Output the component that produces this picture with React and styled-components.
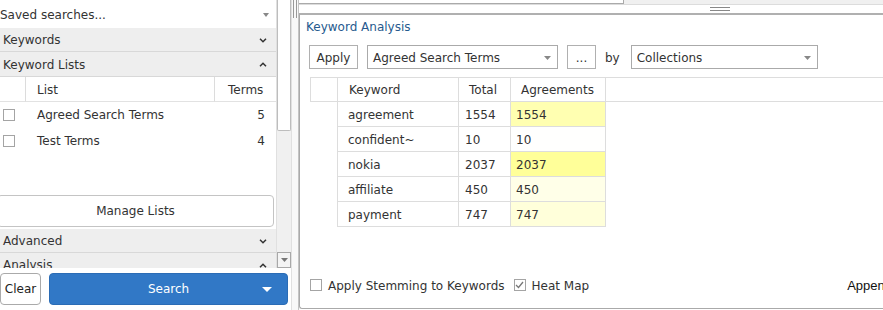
import React from "react";
import styled, { createGlobalStyle } from "styled-components";

const GlobalStyle = createGlobalStyle`
  html, body { margin: 0; padding: 0; background: #fff; overflow: hidden; }
  body {
    font-family: "DejaVu Sans", Verdana, sans-serif;
    font-size: 12px;
    color: #333;
  }
  * { box-sizing: border-box; }
`;

const lists = [
  { name: "Agreed Search Terms", terms: 5 },
  { name: "Test Terms", terms: 4 },
];

const keywords = [
  { word: "agreement", total: 1554, hits: 1554 },
  { word: "confident~", total: 10, hits: 10 },
  { word: "nokia", total: 2037, hits: 2037 },
  { word: "affiliate", total: 450, hits: 450 },
  { word: "payment", total: 747, hits: 747 },
];

const heat = (v, max) => {
  const b = Math.round(255 - (v / max) * 102);
  return `rgb(255,255,${b})`;
};

const Page = styled.div`
  display: flex;
  width: 883px;
  height: 310px;
  overflow: hidden;
`;

const LeftColumn = styled.div`
  width: 291px;
  flex-shrink: 0;
  display: flex;
  flex-direction: column;
`;

const ScrollArea = styled.div`
  height: 268px;
  display: flex;
  overflow: hidden;
`;

const SideContent = styled.div`
  width: 276px;
  display: flex;
  flex-direction: column;
  overflow: hidden;
`;

const SavedRow = styled.div`
  height: 28px;
  flex-shrink: 0;
  display: flex;
  align-items: center;
  justify-content: space-between;
  padding: 1px 7px 0 0;
`;

const SectionHeader = styled.div`
  height: ${(p) => p.$h || 24}px;
  flex-shrink: 0;
  display: flex;
  align-items: center;
  justify-content: space-between;
  padding: 1px 9px 0 3px;
  background: #eeeeee;
  border-bottom: 1px solid #d8d8d8;
`;

const ListTable = styled.div`
  display: grid;
  grid-template-columns: 26px 189px 61px;
  flex-shrink: 0;
`;

const ListHead = styled.div`
  height: 25px;
  display: flex;
  align-items: center;
  padding: 1px 0 0 ${(p) => p.$pad || 0}px;
  border-bottom: 1px solid #e2e2e2;
  border-right: ${(p) => (p.$last ? "none" : "1px solid #dcdcdc")};
`;

const ListCell = styled.div`
  height: 26px;
  display: flex;
  align-items: center;
  justify-content: ${(p) => (p.$right ? "flex-end" : "flex-start")};
  padding: ${(p) => (p.$right ? "0 11px 0 0" : p.$pad ? `0 0 0 ${p.$pad}px` : 0)};
`;

const Box = styled.span`
  width: 12px;
  height: 12px;
  flex-shrink: 0;
  border: 1px solid #a4a4a4;
  background: #fff;
  display: inline-flex;
  align-items: center;
  justify-content: center;
`;

const ManageButton = styled.button`
  flex-shrink: 0;
  margin: 41px 2px 0 -3px;
  width: 277px;
  height: 32px;
  border: 1px solid #c4c4c4;
  border-radius: 4px;
  background: #fff;
  color: #333;
  font: inherit;
`;

const Spacer = styled.div`
  height: ${(p) => p.$h}px;
  flex-shrink: 0;
`;

const Scrollbar = styled.div`
  width: 15px;
  display: flex;
  flex-direction: column;
  background: #f0f0f0;
  border-left: 1px solid #e0e0e0;
`;

const Thumb = styled.div`
  height: 131px;
  background: #fff;
  border: 1px solid #bdbdbd;
  border-top: none;
  border-radius: 0 0 2px 2px;
`;

const ScrollButton = styled.div`
  margin-top: auto;
  height: 16px;
  border: 1px solid #a8a8a8;
  background: #f4f4f4;
  display: flex;
  align-items: center;
  justify-content: center;
`;

const ButtonBar = styled.div`
  display: flex;
  gap: 8px;
  padding-top: 5px;
`;

const ClearButton = styled.button`
  width: 41px;
  height: 32px;
  border: 1px solid #aaa;
  border-radius: 4px;
  background: #fff;
  color: #222;
  font: inherit;
  padding: 0;
`;

const SearchButton = styled.button`
  width: 239px;
  height: 32px;
  border: 1px solid #2b6cb5;
  border-radius: 4px;
  background: #3178c6;
  color: #fff;
  font: inherit;
  display: flex;
  align-items: center;
  padding: 0 15px 0 0;
`;

const SearchLabel = styled.span`
  flex: 1;
  text-align: center;
  padding-left: 25px;
`;

const Splitter = styled.div`
  width: 8px;
  flex-shrink: 0;
  background: #f8f8f8;
  border-left: 1px solid #e0e0e0;
  border-right: 1px solid #c4c4c4;
`;

const VGrip = styled.div`
  width: 4px;
  height: 18px;
  margin-left: 1px;
  border-left: 1px solid #999;
  border-right: 1px solid #999;
`;

const RightColumn = styled.div`
  width: 842px;
  flex-shrink: 0;
  display: flex;
  flex-direction: column;
`;

const TopStrip = styled.div`
  height: 5px;
  display: flex;
  background: #f0f0f0;
  border-bottom: 1px solid #dcdcdc;
`;

const SearchBox = styled.div`
  width: 325px;
  background: #fff;
  border-right: 1px solid #aaa;
  border-bottom: 1px solid #aaa;
`;

const HSplitter = styled.div`
  height: 8px;
  display: flex;
  justify-content: center;
  padding-top: 2px;
`;

const HGrip = styled.div`
  width: 20px;
  height: 4px;
  border-top: 1px solid #888;
  border-bottom: 1px solid #888;
`;

const Panel = styled.div`
  flex: 1;
  margin-bottom: 1px;
  display: flex;
  flex-direction: column;
  border-top: 2px solid #b0b0b0;
  border-left: 1px solid #aaa;
  border-bottom: 1px solid #aaa;
  border-bottom-left-radius: 3px;
`;

const Title = styled.div`
  height: 22px;
  line-height: 22px;
  padding: 1px 0 0 6px;
  color: #265a8e;
`;

const Toolbar = styled.div`
  margin: 8px 0 0 9px;
  height: 24px;
  display: flex;
  align-items: center;
  gap: 9px;
`;

const ToolButton = styled.button`
  width: ${(p) => p.$w}px;
  height: 24px;
  border: 1px solid #b0b0b0;
  background: #fff;
  color: #333;
  font: inherit;
  padding: 1px 0 0;
`;

const Select = styled.div`
  width: ${(p) => p.$w}px;
  height: 24px;
  border: 1px solid #aaa;
  background: #fff;
  display: flex;
  align-items: center;
  justify-content: space-between;
  padding: 1px 6px 0 5px;
`;

const By = styled.span`
  margin: 1px 2px 0 0;
`;

const Grid = styled.div`
  margin: 8px 0 0 10px;
  display: grid;
  grid-template-columns: 28px 121px 52px 95px 1fr;
`;

const HeadCell = styled.div`
  height: 25px;
  display: flex;
  align-items: center;
  padding: 1px 0 0 ${(p) => p.$pad || 0}px;
  border-top: 1px solid #dddddd;
  border-bottom: 1px solid #dddddd;
  border-right: ${(p) => (p.$open ? "none" : "1px solid #dddddd")};
  border-left: ${(p) => (p.$first ? "1px solid #dddddd" : "none")};
`;

const Cell = styled.div`
  height: 25px;
  display: flex;
  align-items: center;
  padding: 1px 0 0 ${(p) => p.$pad || 0}px;
  border-bottom: ${(p) => (p.$blank ? "none" : "1px solid #dddddd")};
  border-right: ${(p) => (p.$open ? "none" : "1px solid #dddddd")};
`;

const Fill = styled.div`
  flex: 1;
`;

const BottomBar = styled.div`
  height: 24px;
  margin: 0 0 11px 10px;
  display: flex;
  align-items: center;
`;

const CheckLabel = styled.span`
  margin: 1px 9px 0 6px;
`;

const AppendLabel = styled.span`
  margin-left: 249px;
  font-family: "Liberation Sans", Arial, sans-serif;
  font-size: 13px;
  color: #111;
`;

const Chevron = ({ up }) => (
  <svg width="8" height="5" viewBox="0 0 8 5">
    <polyline
      points={up ? "1,4.2 4,1.2 7,4.2" : "1,0.8 4,3.8 7,0.8"}
      fill="none"
      stroke="#333"
      strokeWidth="1.5"
    />
  </svg>
);

const Caret = ({ color = "#888", w = 7, h = 4 }) => (
  <svg width={w} height={h} viewBox={`0 0 ${w} ${h}`}>
    <polygon points={`0,0 ${w},0 ${w / 2},${h}`} fill={color} />
  </svg>
);

const Check = ({ on }) => (
  <Box>
    {on && (
      <svg width="9" height="8" viewBox="0 0 9 8">
        <polyline points="1,4 3.5,6.5 8,1" fill="none" stroke="#777" strokeWidth="1.3" />
      </svg>
    )}
  </Box>
);

export default function App() {
  const max = Math.max(...keywords.map((k) => k.hits));
  return (
    <>
      <GlobalStyle />
      <Page>
        <LeftColumn>
          <ScrollArea>
            <SideContent>
              <SavedRow>
                <span>Saved searches...</span>
                <Caret w={6} h={4} />
              </SavedRow>
              <SectionHeader>
                <span>Keywords</span>
                <Chevron />
              </SectionHeader>
              <SectionHeader $h={25}>
                <span>Keyword Lists</span>
                <Chevron up />
              </SectionHeader>
              <ListTable>
                <ListHead />
                <ListHead $pad={11}>List</ListHead>
                <ListHead $pad={13} $last>Terms</ListHead>
                {lists.map((l) => (
                  <React.Fragment key={l.name}>
                    <ListCell $pad={3}>
                      <Check />
                    </ListCell>
                    <ListCell $pad={11}>{l.name}</ListCell>
                    <ListCell $right>{l.terms}</ListCell>
                  </React.Fragment>
                ))}
              </ListTable>
              <ManageButton>Manage Lists</ManageButton>
              <Spacer $h={2} />
              <SectionHeader>
                <span>Advanced</span>
                <Chevron />
              </SectionHeader>
              <SectionHeader>
                <span>Analysis</span>
                <Chevron up />
              </SectionHeader>
            </SideContent>
            <Scrollbar>
              <Thumb />
              <ScrollButton>
                <Caret color="#777" w={7} h={4} />
              </ScrollButton>
            </Scrollbar>
          </ScrollArea>
          <ButtonBar>
            <ClearButton>Clear</ClearButton>
            <SearchButton>
              <SearchLabel>Search</SearchLabel>
              <Caret color="#fff" w={10} h={5} />
            </SearchButton>
          </ButtonBar>
        </LeftColumn>

        <Splitter>
          <VGrip />
        </Splitter>

        <RightColumn>
          <TopStrip>
            <SearchBox />
          </TopStrip>
          <HSplitter>
            <HGrip />
          </HSplitter>
          <Panel>
            <Title>Keyword Analysis</Title>
            <Toolbar>
              <ToolButton $w={49}>Apply</ToolButton>
              <Select $w={191}>
                <span>Agreed Search Terms</span>
                <Caret />
              </Select>
              <ToolButton $w={29}>...</ToolButton>
              <By>by</By>
              <Select $w={187}>
                <span>Collections</span>
                <Caret />
              </Select>
            </Toolbar>
            <Grid>
              <HeadCell $first />
              <HeadCell $pad={11}>Keyword</HeadCell>
              <HeadCell $pad={10}>Total</HeadCell>
              <HeadCell $pad={10}>Agreements</HeadCell>
              <HeadCell $open />
              {keywords.map((k) => (
                <React.Fragment key={k.word}>
                  <Cell $blank />
                  <Cell $pad={10}>{k.word}</Cell>
                  <Cell $pad={6}>{k.total}</Cell>
                  <Cell $pad={5} style={{ background: heat(k.hits, max) }}>
                    {k.hits}
                  </Cell>
                  <Cell $blank $open />
                </React.Fragment>
              ))}
            </Grid>
            <Fill />
            <BottomBar>
              <Check />
              <CheckLabel>Apply Stemming to Keywords</CheckLabel>
              <Check on />
              <CheckLabel>Heat Map</CheckLabel>
              <AppendLabel>Append</AppendLabel>
            </BottomBar>
          </Panel>
        </RightColumn>
      </Page>
    </>
  );
}
